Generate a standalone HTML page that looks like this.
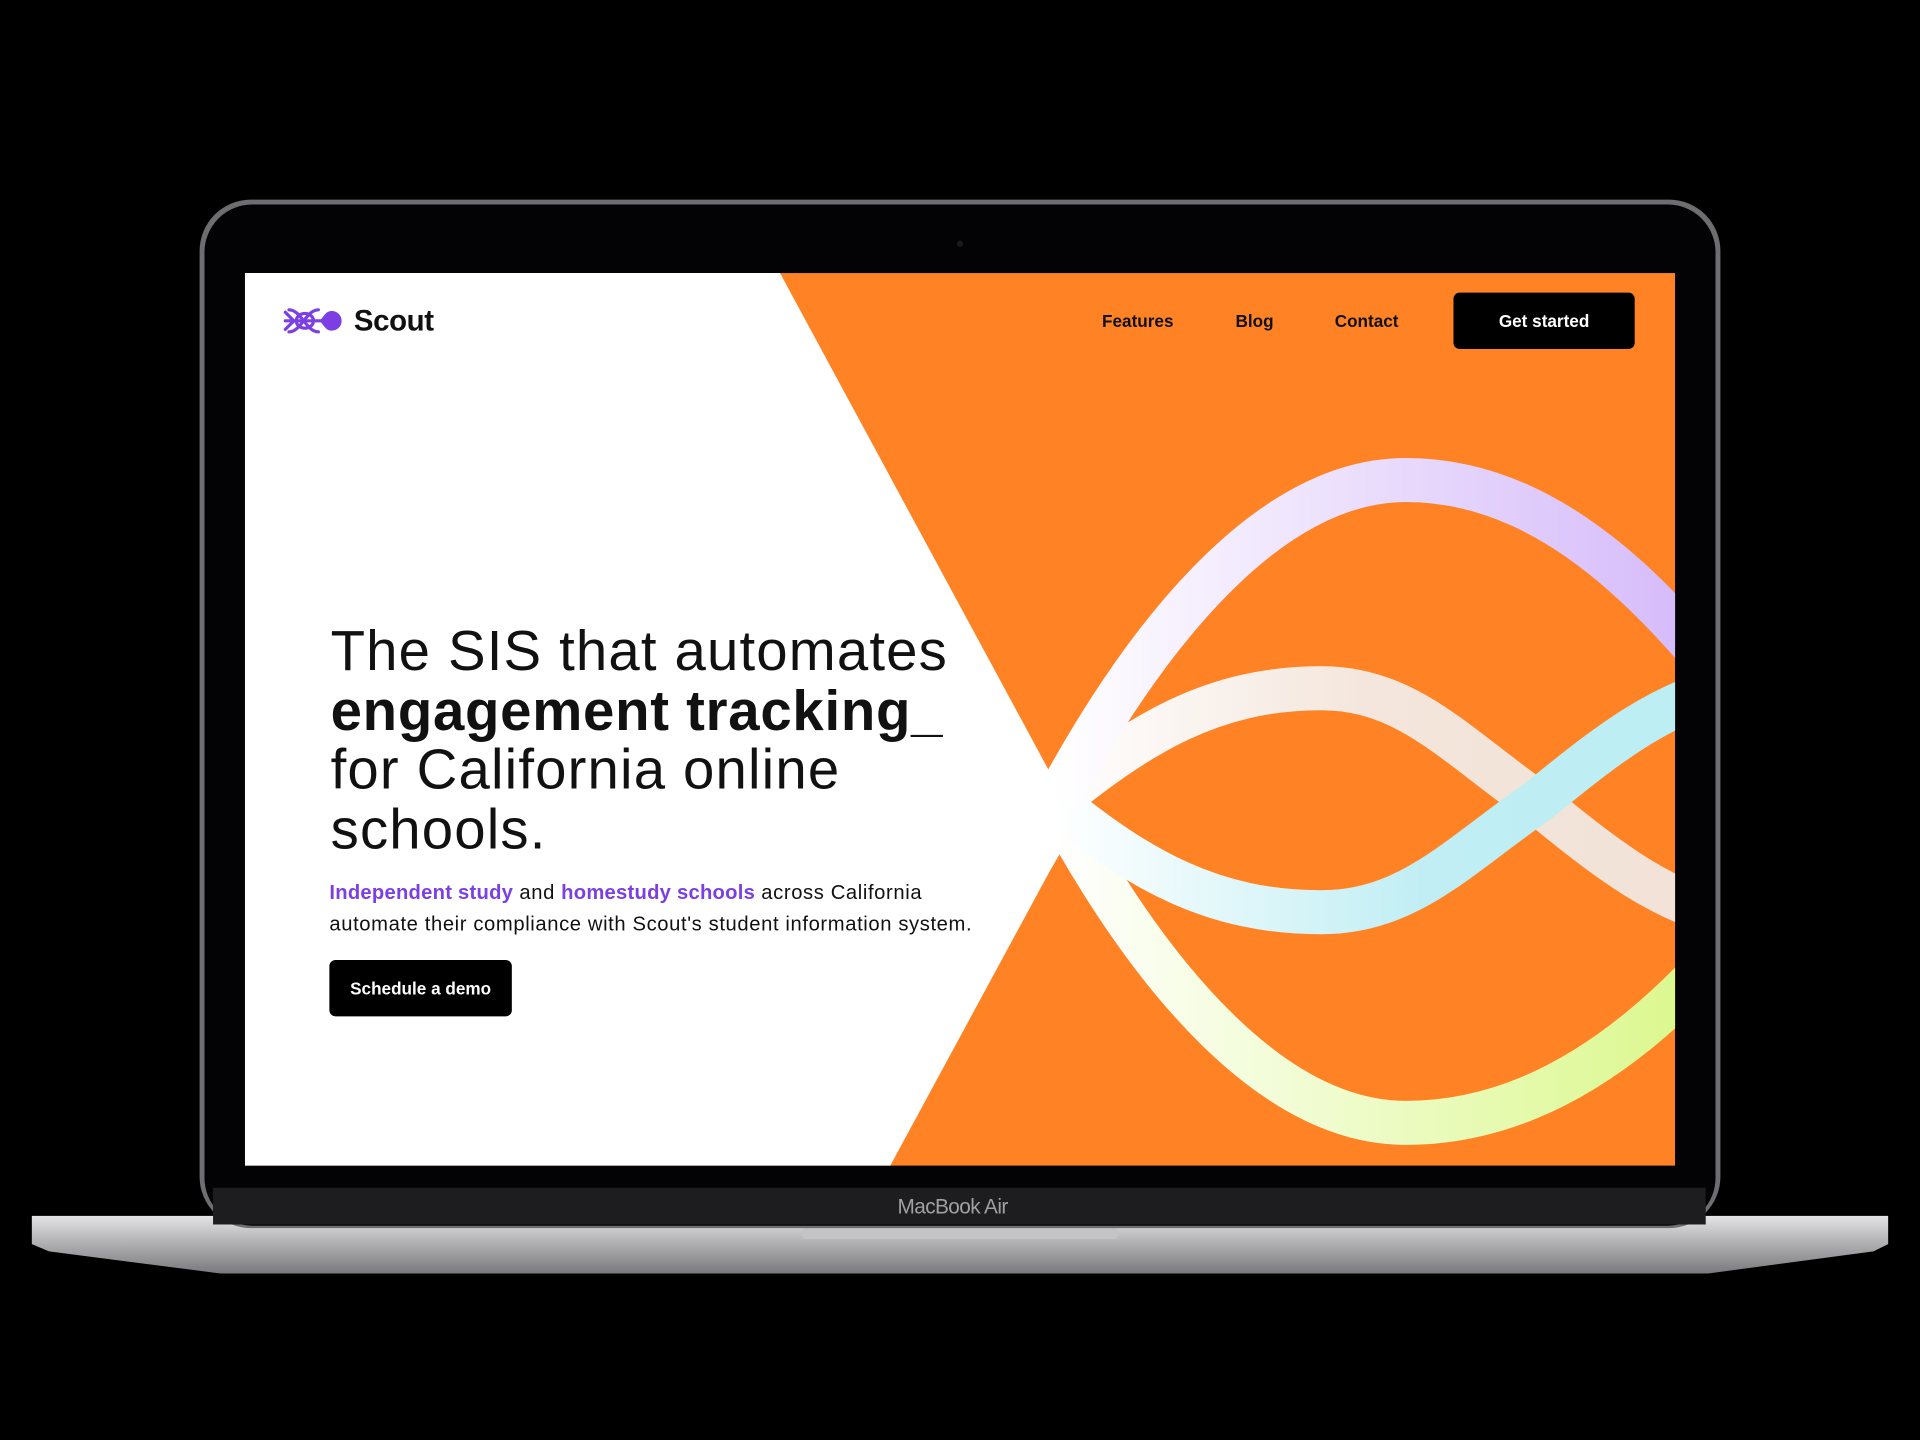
<!DOCTYPE html>
<html><head><meta charset="utf-8"><style>
html,body{margin:0;padding:0;background:#000;width:1920px;height:1440px;overflow:hidden}
#s{position:absolute;left:0;top:0;width:1568px;height:1176px;transform:scale(1.22449);transform-origin:0 0;font-family:"Liberation Sans",sans-serif}
.t{position:absolute;white-space:nowrap}
.nav{font-size:14px;font-weight:bold;color:#111;top:254px}
.btn{position:absolute;background:#000;color:#fff;font-weight:bold;font-size:14px;border-radius:5px;display:flex;align-items:center;justify-content:center}
h1{position:absolute;left:270px;top:507px;margin:0;font-weight:normal;font-size:46px;line-height:48.5px;color:#111;letter-spacing:0.95px}
h1 b{font-weight:bold;letter-spacing:0.6px}
p{position:absolute;left:269px;top:716px;margin:0;font-size:16.5px;line-height:26px;color:#111;letter-spacing:0.5px}
p span{color:#7B3FE4;font-weight:bold;letter-spacing:0.2px}
</style></head><body><div id="s">
<svg width="1568" height="1176" viewBox="0 0 1568 1176" style="position:absolute;left:0;top:0">
<defs>
<linearGradient id="base" x1="0" y1="0" x2="0" y2="1"><stop offset="0" stop-color="#e4e4e6"/><stop offset="0.35" stop-color="#bdbdc0"/><stop offset="1" stop-color="#7a7a7d"/></linearGradient>
<linearGradient id="gA" gradientUnits="userSpaceOnUse" x1="860" y1="0" x2="1368" y2="0"><stop offset="0" stop-color="#fff"/><stop offset="1" stop-color="#D6BCFA"/></linearGradient>
<linearGradient id="gB" gradientUnits="userSpaceOnUse" x1="860" y1="0" x2="1368" y2="0"><stop offset="0" stop-color="#fff"/><stop offset="1" stop-color="#DCF890"/></linearGradient>
<linearGradient id="gC" gradientUnits="userSpaceOnUse" x1="860" y1="0" x2="1368" y2="0"><stop offset="0" stop-color="#fff"/><stop offset="0.5" stop-color="#F4E6DC"/><stop offset="1" stop-color="#F2E2D8"/></linearGradient>
<linearGradient id="gD" gradientUnits="userSpaceOnUse" x1="860" y1="0" x2="1368" y2="0"><stop offset="0" stop-color="#fff"/><stop offset="0.6" stop-color="#C0EEF4"/><stop offset="1" stop-color="#BCEEF4"/></linearGradient>
<clipPath id="scr"><rect x="200" y="223" width="1168" height="729"/></clipPath>
</defs>
<path d="M26 993 H1542 V1016 L1530 1022 L1395 1040 H180 L40 1022 L26 1016 Z" fill="url(#base)"/>
<rect x="655" y="998" width="258" height="14" rx="3" fill="#c4c4c7"/>
<rect x="163" y="163" width="1242" height="840" rx="42" fill="#6e6e70"/>
<rect x="167" y="167" width="1234" height="834" rx="39" fill="#030305"/>
<rect x="174" y="970" width="1219" height="30" fill="#1d1d1f"/>
<circle cx="784" cy="199" r="2.5" fill="#1a1a1e"/>
<g clip-path="url(#scr)">
<rect x="200" y="223" width="1168" height="729" fill="#FF8224"/>
<path d="M200 223 H637 L857 630 L890 655 L857 712 L727 952 H200 Z" fill="#fff"/>
<g fill="none" stroke-width="36">
<path d="M862 655 C940 800 1040 917 1148 917 C1290 917 1400 800 1500 655" stroke="url(#gB)"/>
<path d="M862 655 C930 600 990 562 1079 562 C1150 562 1190 610 1255 655 C1310 700 1360 740 1420 750" stroke="url(#gC)"/>
<path d="M862 655 C930 710 990 745 1079 745 C1150 745 1190 700 1255 655 C1310 610 1360 570 1420 560" stroke="url(#gD)"/>
<path d="M862 655 C940 510 1040 392 1148 392 C1280 392 1380 510 1480 655" stroke="url(#gA)"/>
</g>
<g stroke="#7B3FE4" stroke-width="2.6" fill="none" stroke-linecap="round">
<path d="M233 255 L240 262 L233 269"/>
<path d="M236 253 C246 253 250 271 260 271"/>
<path d="M236 271 C246 271 250 253 260 253"/>
<ellipse cx="249" cy="262" rx="7" ry="6"/>
<path d="M233 262 H264"/>
</g>
<path d="M261 262 C265 258 266 254 271 254 A8 8 0 1 1 271 270 C266 270 265 266 261 262Z" fill="#7B3FE4"/>
</g>
</svg>
<div class="t" style="left:289px;top:249px;font-size:24px;font-weight:bold;color:#111;letter-spacing:-0.3px">Scout</div>
<div class="t nav" style="left:900px">Features</div>
<div class="t nav" style="left:1009px">Blog</div>
<div class="t nav" style="left:1090px">Contact</div>
<div class="btn" style="left:1187px;top:239px;width:148px;height:46px">Get started</div>
<h1>The SIS that automates<br><b>engagement tracking_</b><br>for California online<br>schools.</h1>
<p><span>Independent study</span> and <span>homestudy schools</span> across California<br>automate their compliance with Scout's student information system.</p>
<div class="btn" style="left:269px;top:784px;width:149px;height:46px">Schedule a demo</div>
<div class="t" style="left:733px;top:976px;font-size:17px;color:#a0a0a4;letter-spacing:-0.5px">MacBook Air</div>
</div></body></html>
